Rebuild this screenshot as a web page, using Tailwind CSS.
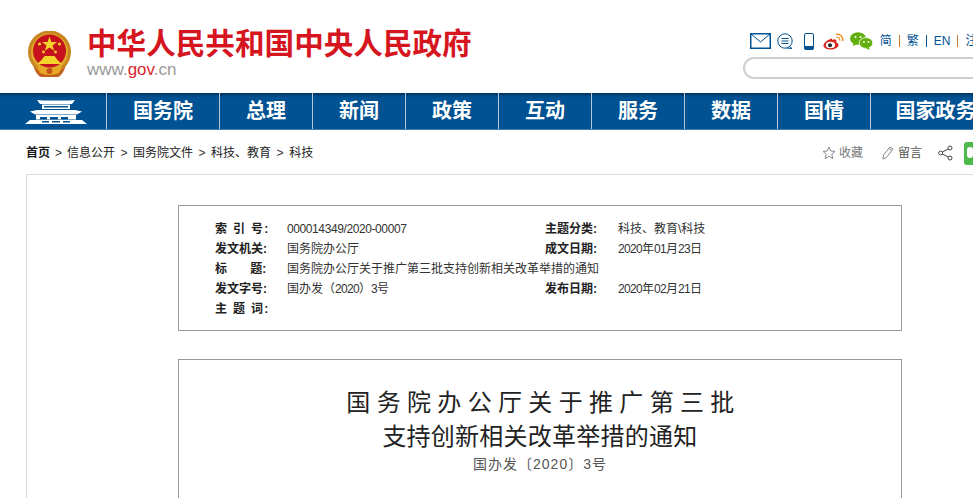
<!DOCTYPE html>
<html lang="zh-CN">
  <head>
    <meta charset="UTF-8" />
    <title>国务院办公厅关于推广第三批支持创新相关改革举措的通知</title>
    <script src="https://cdn.jsdelivr.net/npm/@tailwindcss/browser@4"></script>
  </head>
  <body class="h-[498px] w-[973px] overflow-hidden bg-white font-['Liberation_Sans','Noto_Sans_CJK_SC',sans-serif]">
    <!-- header -->
    <header class="flex h-[93px] w-[973px] overflow-hidden">
      <svg class="ml-[27px] mt-[31px] h-[47px] w-[45px] shrink-0" viewBox="0 0 45 47">
        <path d="M6 34 Q9 44 14 46 L31 46 Q36 44 39 34 Z" fill="#c4611c" />
        <circle cx="22.5" cy="21" r="21.5" fill="#c9851f" />
        <circle cx="22.5" cy="21" r="18.5" fill="#e0ab2c" />
        <circle cx="22.5" cy="20" r="16.5" fill="#c5121c" />
        <polygon points="22.5,5.5 24.4,11 30,11 25.5,14.4 27.2,19.8 22.5,16.5 17.8,19.8 19.5,14.4 15,11 20.6,11" fill="#f6d32b" />
        <circle cx="12.5" cy="13" r="1.6" fill="#f6d32b" />
        <circle cx="32.5" cy="13" r="1.6" fill="#f6d32b" />
        <circle cx="16.5" cy="21" r="1.4" fill="#f6d32b" />
        <circle cx="28.5" cy="21" r="1.4" fill="#f6d32b" />
        <path d="M14.5 29 L17.5 25 L27.5 25 L30.5 29 L35 33 L10 33 Z" fill="#f6d32b" />
        <path d="M10 35 Q22.5 40 35 35 L32 42 Q22.5 46 13 42 Z" fill="#e8a826" />
        <circle cx="22.5" cy="40" r="3" fill="#c5521a" />
      </svg>
      <div class="ml-[15px] mt-[27px] shrink-0">
        <div class="text-[29.6px] leading-[34px] font-bold whitespace-nowrap text-[#d6161f]">中华人民共和国中央人民政府</div>
        <div class="text-[17px] leading-[17px] text-[#999]">www.<span class="text-[#d6262c]">gov</span>.cn</div>
      </div>
      <div class="ml-[278px] mt-[31px] w-[300px] shrink-0">
        <div class="flex h-[20px] items-center">
          <svg class="h-[16px] w-[21px] shrink-0" viewBox="0 0 21 16" fill="none" stroke="#005293">
            <rect x="0.75" y="0.75" width="19.5" height="14.5" stroke-width="1.5" />
            <path d="M1 1 L10.5 9 L20 1" stroke-width="1" />
          </svg>
          <svg class="ml-[6px] h-[17px] w-[16px] shrink-0" viewBox="0 0 16 17" fill="none" stroke="#005293">
            <circle cx="8" cy="8" r="7.2" />
            <path d="M4.5 5.5H11.5M4.5 8H11.5M4.5 10.5H11.5" />
            <path d="M12 13 L15 15.5 L10 15" />
          </svg>
          <svg class="ml-[11px] h-[17px] w-[10px] shrink-0" viewBox="0 0 10 17">
            <rect x="0.5" y="0.5" width="9" height="16" rx="1.5" fill="none" stroke="#005293" />
            <rect x="0.5" y="13" width="9" height="3.5" fill="#005293" />
          </svg>
          <svg class="ml-[9px] h-[17px] w-[21px] shrink-0" viewBox="0 0 21 17">
            <path d="M9 5.5 C4.5 6.5 0.5 10 0.5 12.5 C0.5 15 4 16.5 8 16.5 C12.5 16.5 15.5 14 15.5 12 C15.5 10.5 14 10 13.2 9.6 C13.8 8 13.5 6.5 11.5 6.2 C10.5 6.2 9 7 9 7 C9.3 5.8 9.5 5.3 9 5.5 Z" fill="#d9241c" />
            <ellipse cx="7.5" cy="12" rx="4.6" ry="3.3" fill="#fff" />
            <circle cx="7" cy="12.2" r="2" fill="#222" />
            <path d="M13 1.5 C17 0.5 20.5 3.5 19.5 8" fill="none" stroke="#ee8e25" stroke-width="1.5" />
            <path d="M13.5 4.5 C15.5 4 17.3 5.5 16.6 7.6" fill="none" stroke="#ee8e25" stroke-width="1.2" />
          </svg>
          <svg class="ml-[6px] h-[18px] w-[23px] shrink-0" viewBox="0 0 23 18">
            <ellipse cx="8" cy="6.5" rx="8" ry="6.3" fill="#62b00e" />
            <path d="M3.5 10 L3 14 L7 12 Z" fill="#62b00e" />
            <ellipse cx="16" cy="11" rx="6.8" ry="5.4" fill="#62b00e" stroke="#fff" stroke-width="0.8" />
            <path d="M18.5 15 L20 18 L15.5 16 Z" fill="#62b00e" />
            <circle cx="5.5" cy="5" r="1" fill="#fff" />
            <circle cx="10.5" cy="5" r="1" fill="#fff" />
            <circle cx="14" cy="10" r="0.9" fill="#fff" />
            <circle cx="18.5" cy="10" r="0.9" fill="#fff" />
          </svg>
          <div class="ml-[7px] flex items-center text-[12px] leading-[14px] whitespace-nowrap text-[#005293]">
            <span>简</span><span class="mx-[7px] h-[12px] w-px bg-[#c9792f]"></span>
            <span>繁</span><span class="mx-[7px] h-[12px] w-px bg-[#005293]"></span>
            <span>EN</span><span class="mx-[7px] h-[12px] w-px bg-[#c9792f]"></span>
            <span>注册</span>
          </div>
        </div>
        <div class="mt-[6px] -ml-[7px] h-[22px] w-[300px] rounded-full border-2 border-[#cfcfcf]"></div>
      </div>
    </header>

    <!-- nav -->
    <div class="w-[973px] overflow-hidden">
      <nav class="flex h-[37px] w-[1100px] border-b border-[#3f7fb4] bg-[#005293] bg-gradient-to-b from-[#00345f] from-0% to-[#005293] to-[12%] text-[20px] leading-[36px] font-bold text-white">
        <div class="flex h-full w-[106px] items-center justify-center pl-[6px]">
          <svg class="h-[26px] w-[62px]" viewBox="0 0 62 26">
            <path d="M12 2 L18 2.5 L44 2.5 L50 2 L47 6 L15 6 Z" fill="#fff" />
            <path d="M17 6.5 H45 V11 H17 Z" fill="#fff" />
            <path d="M19 8 H43 V9.5 H19 Z" fill="#005293" />
            <path d="M5 13.5 L12 12 L50 12 L57 13.5 L52 16.5 L10 16.5 Z" fill="#fff" />
            <path d="M11 17 H51 V21.5 H11 Z" fill="#fff" />
            <path d="M15 19 H22 V21.5 H15 Z M25 19 H33 V21.5 H25 Z M36 19 H43 V21.5 H36 Z" fill="#005293" />
            <path d="M0 26 L5 22 L57 22 L62 26 Z" fill="#fff" />
            <path d="M17 23 H24 V24.5 H17 Z M27 23 H35 V24.5 H27 Z M38 23 H45 V24.5 H38 Z" fill="#005293" />
          </svg>
        </div>
        <a class="w-[113px] border-l border-[#b9c9d8] text-center">国务院</a>
        <a class="w-[93px] border-l border-[#b9c9d8] text-center">总理</a>
        <a class="w-[93px] border-l border-[#b9c9d8] text-center">新闻</a>
        <a class="w-[93px] border-l border-[#b9c9d8] text-center">政策</a>
        <a class="w-[93px] border-l border-[#b9c9d8] text-center">互动</a>
        <a class="w-[93px] border-l border-[#b9c9d8] text-center">服务</a>
        <a class="w-[93px] border-l border-[#b9c9d8] text-center">数据</a>
        <a class="w-[93px] border-l border-[#b9c9d8] text-center">国情</a>
        <a class="w-[130px] border-l border-[#b9c9d8] text-center">国家政务</a>
      </nav>
    </div>

    <!-- breadcrumb -->
    <div class="flex h-[44px] w-[973px] items-center pt-px pl-[26px] text-[12px] text-[#222]">
      <b class="text-[#1a1a1a]">首页</b>
      <span class="mx-[5px] text-[#333]">&gt;</span>
      <span>信息公开</span>
      <span class="mx-[5.5px] text-[#333]">&gt;</span>
      <span>国务院文件</span>
      <span class="mx-[5.5px] text-[#333]">&gt;</span>
      <span>科技、教育</span>
      <span class="mx-[5.5px] text-[#333]">&gt;</span>
      <span>科技</span>
      <div class="ml-auto flex items-center text-[12px] text-[#777]">
        <svg class="h-[14px] w-[14px]" viewBox="0 0 14 14" fill="none" stroke="#8a8a8a">
          <polygon points="7,1 8.8,5 13,5.4 9.8,8.2 10.8,12.6 7,10.3 3.2,12.6 4.2,8.2 1,5.4 5.2,5" />
        </svg>
        <span class="ml-[3px]">收藏</span>
        <svg class="ml-[19px] h-[14px] w-[12px]" viewBox="0 0 12 14" fill="none" stroke="#8a8a8a">
          <path d="M1 13 L1.5 9 L8 1 L11 3 L4.5 11.5 Z" />
          <path d="M6.8 2.5 L9.8 4.6" />
        </svg>
        <span class="ml-[4px] text-[#555]">留言</span>
        <svg class="ml-[16px] h-[16px] w-[15px]" viewBox="0 0 15 16" fill="none" stroke="#444">
          <circle cx="2.7" cy="8" r="2" />
          <circle cx="12" cy="3" r="2" />
          <circle cx="12" cy="13" r="2" />
          <path d="M4.5 7 L10.2 4 M4.5 9 L10.2 12" />
        </svg>
        <div class="ml-[11px] mt-px flex h-[23px] w-[9px] overflow-hidden rounded-l-[3px] bg-[#4cb94a]">
          <span class="mt-[5px] ml-[3px] block h-[11px] w-[12px] rounded-full bg-white"></span>
        </div>
      </div>
    </div>

    <!-- content -->
    <main class="ml-[26px] h-[324px] w-[947px] overflow-hidden border-t border-l border-[#dcdcdc] pt-[30px] pl-[151px]">
      <section class="h-[126px] w-[724px] border border-[#999] pt-[13px] text-[12px] leading-[20px] text-[#333]">
        <div class="flex">
          <b class="ml-[36px] w-[72px] tracking-[1.33px] whitespace-nowrap text-[#222]">索 引 号:</b>
          <span class="w-[258px] tracking-[-0.4px]">000014349/2020-00007</span>
          <b class="w-[73px] text-[#222]">主题分类:</b>
          <span>科技、教育\科技</span>
        </div>
        <div class="flex">
          <b class="ml-[36px] w-[72px] text-[#222]">发文机关:</b>
          <span class="w-[258px]">国务院办公厅</span>
          <b class="w-[73px] text-[#222]">成文日期:</b>
          <span><span class="tracking-[-0.67px]">2020</span>年<span class="tracking-[-0.67px]">01</span>月<span class="tracking-[-0.67px]">23</span>日</span>
        </div>
        <div class="flex">
          <b class="ml-[36px] w-[72px] whitespace-pre text-[#222]">标       题:</b>
          <span>国务院办公厅关于推广第三批支持创新相关改革举措的通知</span>
        </div>
        <div class="flex">
          <b class="ml-[36px] w-[72px] text-[#222]">发文字号:</b>
          <span class="w-[258px]">国办发（<span class="tracking-[-0.67px]">2020</span>）<span class="tracking-[-0.67px]">3</span>号</span>
          <b class="w-[73px] text-[#222]">发布日期:</b>
          <span><span class="tracking-[-0.67px]">2020</span>年<span class="tracking-[-0.67px]">02</span>月<span class="tracking-[-0.67px]">21</span>日</span>
        </div>
        <div class="flex">
          <b class="ml-[36px] w-[72px] tracking-[1.33px] whitespace-nowrap text-[#222]">主 题 词:</b>
        </div>
      </section>
      <section class="mt-[28px] h-[200px] w-[724px] border border-[#999] pt-[26px] text-center text-[#222]">
        <div class="pl-[7px] text-[24px] leading-[34px] tracking-[6.33px]">国务院办公厅关于推广第三批</div>
        <div class="text-[24px] leading-[34px] tracking-[0.25px]">支持创新相关改革举措的通知</div>
        <div class="text-[14px] leading-[20px] tracking-[1px] text-[#555]">国办发〔2020〕3号</div>
      </section>
    </main>
  </body>
</html>
